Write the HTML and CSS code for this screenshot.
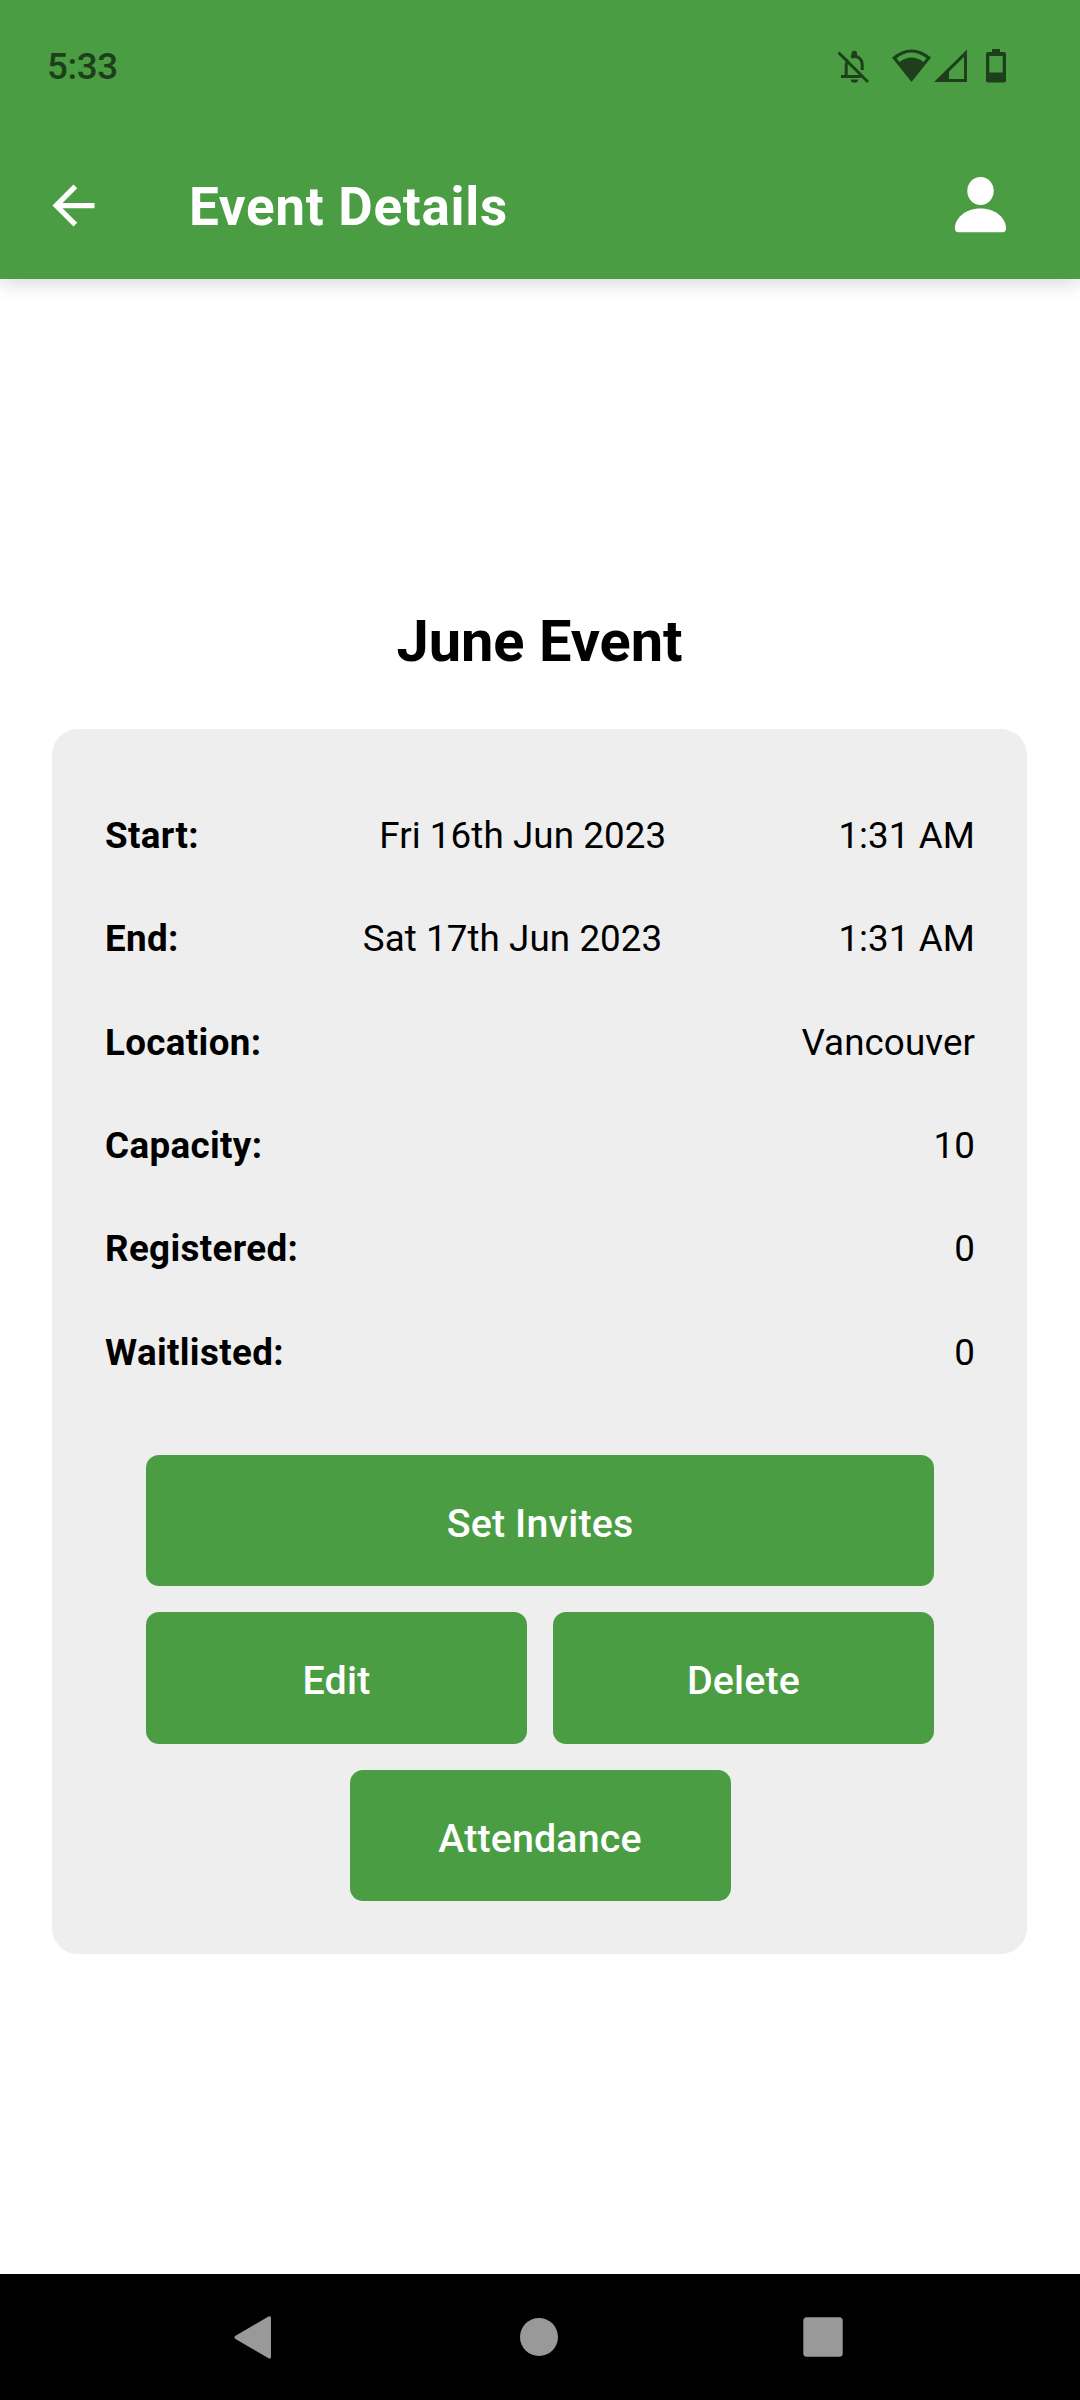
FILE: index.html
```html
<!DOCTYPE html>
<html lang="en">
<head>
<meta charset="utf-8">
<title>Event Details</title>
<link rel="stylesheet" href="styles.css">
</head>
<body>
<div class="screen">
  <header class="header">
    <div class="status">
      <span class="clock">5:33</span>
      <svg class="status-icons" width="172" height="40" viewBox="836 46 172 40" fill="#1e3f1b">
        <g fill="none" stroke="#1e3f1b" stroke-width="3">
          <path d="M838.5 52.5L868 82M841 76.5H861M846.2 76V65Q846.2 61.5 848 59.5M851 57.2Q854.5 55.6 858 57.2Q862.2 59.5 862.2 65V70"/>
        </g>
        <path d="M851.5 56V53.6A2.8 2.8 0 0 1 857.100 53.600V56ZM850.800 79.500H858A3.600 3.200 0 0 1 850.800 79.500Z"/>
        <path fill-rule="evenodd" d="M892 57.500Q911.500 41.500 931 57.500L911.500 82ZM896.500 58.300L899.500 62Q911.500 53 923.500 62L926.500 58.300Q911.500 46.500 896.500 58.300Z"/>
        <path fill-rule="evenodd" d="M967 49.500V82H934ZM964 57L949 71.500V79H964Z"/>
        <path fill-rule="evenodd" d="M992 49H1000V52H1004Q1006 52 1006 54V80.500Q1006 82.600 1004 82.600H988Q986 82.600 986 80.500V54Q986 52 988 52H992ZM989.300 56V72.500H1002.700V56Z"/>
      </svg>
    </div>
    <div class="toolbar">
      <svg class="back" width="63" height="63" viewBox="0 0 24 24" fill="#fff"><path d="M20 11H7.830l5.590-5.590L12 4l-8 8 8 8 1.410-1.410L7.830 13H20v-2z"/></svg>
      <h1 class="toolbar-title">Event Details</h1>
      <svg class="person" width="52" height="60" viewBox="0 0 52 60" fill="#fff">
        <ellipse cx="26.500" cy="15" rx="13.200" ry="14"/>
        <path d="M.9 52C.9 43 10.500 32.500 26.500 32.500S52 43 52 52Q52 56.300 48.500 56.300H4.500Q.9 56.300 .9 52Z"/>
      </svg>
    </div>
  </header>
  <main class="content">
    <h2 class="event-name">June Event</h2>
    <section class="card">
      <div class="details">
        <div class="row"><b>Start:</b><span class="date">Fri 16th Jun 2023</span><span>1:31 AM</span></div>
        <div class="row"><b>End:</b><span class="date">Sat 17th Jun 2023</span><span>1:31 AM</span></div>
        <div class="row"><b>Location:</b><span>Vancouver</span></div>
        <div class="row"><b>Capacity:</b><span>10</span></div>
        <div class="row"><b>Registered:</b><span>0</span></div>
        <div class="row"><b>Waitlisted:</b><span>0</span></div>
      </div>
      <div class="actions">
        <button class="button wide">Set Invites</button>
        <button class="button">Edit</button>
        <button class="button">Delete</button>
        <button class="button">Attendance</button>
      </div>
    </section>
  </main>
  <nav class="navbar">
    <svg width="38" height="43" viewBox="0 0 38 43" fill="#999"><path d="M34.500 .6Q37 -.6 37 2V41Q37 43.400 34.500 42.200L1.500 23Q-.6 21.400 1.500 19.800Z"/></svg>
    <svg width="40" height="40" viewBox="0 0 40 40" fill="#999"><circle cx="21" cy="20" r="19"/></svg>
    <svg width="40" height="40" viewBox="0 0 40 40" fill="#999"><rect x=".3" y=".3" width="39.400" height="39.400" rx="3.500"/></svg>
  </nav>
</div>
</body>
</html>
```
FILE: styles.css
```css
* {
  box-sizing: border-box;
}

body {
  margin: 0;
  background: #fff;
  color: #000;
  font-family: Roboto, sans-serif;
}

.screen {
  display: flex;
  flex-direction: column;
  width: 1080px;
  height: 2400px;
}

.header {
  flex: none;
  height: 279px;
  background: #4a9d42;
  box-shadow: 0 4px 18px rgba(0, 0, 0, 0.16);
}

.status {
  display: flex;
  align-items: center;
  justify-content: space-between;
  height: 132px;
  padding: 0 72px 0 47px;
}

.clock {
  color: #1e3f1b;
  font-size: 36.75px;
  font-weight: 500;
  letter-spacing: -0.4px;
}

.toolbar {
  display: flex;
  align-items: center;
  height: 147px;
  padding: 0 74px 0 42px;
}

.toolbar-title {
  flex: 1;
  margin: 2px 0 0 84px;
  font-size: 53px;
  font-weight: 700;
  letter-spacing: 0.7px;
  color: #fff;
}

.content {
  flex: 1;
  display: flex;
  flex-direction: column;
  padding: 328px 53px 0 52px;
}

.event-name {
  margin: 0 0 54px;
  font-size: 57.75px;
  line-height: 68px;
  font-weight: 700;
  text-align: center;
}

.card {
  height: 1225px;
  padding: 55px 52px 0 53px;
  background: #eee;
  border-radius: 26px;
}

.row {
  display: flex;
  align-items: center;
  justify-content: space-between;
  height: 103.3px;
  font-size: 36.75px;
  letter-spacing: 0.08px;
}

.row b {
  letter-spacing: 0.35px;
}

.date {
  margin-left: 8px;
}

.actions {
  display: flex;
  flex-wrap: wrap;
  justify-content: center;
  gap: 26px 26px;
  width: 788px;
  margin: 51.2px auto 0;
}

.button {
  width: 381px;
  height: 131.5px;
  padding: 5px 0 0;
  border: 0;
  border-radius: 13px;
  background: #4a9d42;
  color: #fff;
  font: 500 39.4px Roboto, sans-serif;
  letter-spacing: 0.15px;
}

.wide {
  width: 788px;
}

.navbar {
  display: flex;
  flex: none;
  align-items: center;
  justify-content: space-between;
  height: 126px;
  padding: 0 237px 0 234px;
  background: #000;
}
```
